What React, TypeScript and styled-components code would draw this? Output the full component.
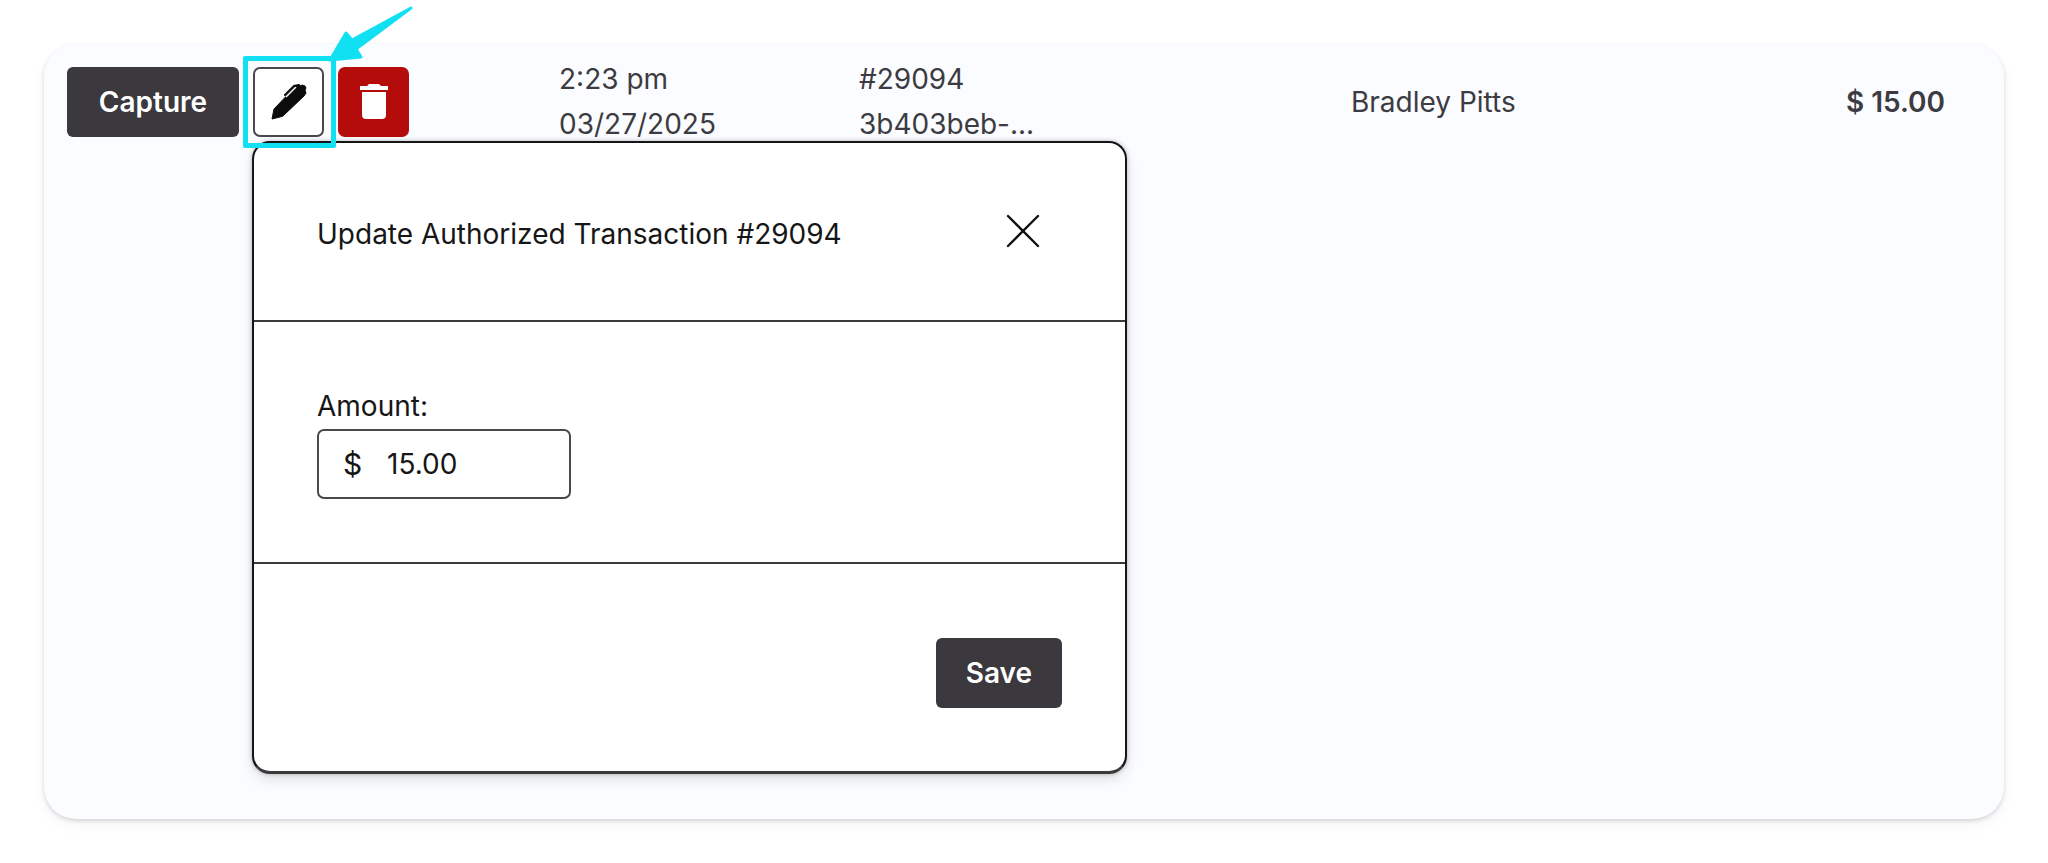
import React from "react";
import styled, { createGlobalStyle, css } from "styled-components";

const GlobalStyle = createGlobalStyle`
  *, *::before, *::after { box-sizing: border-box; }
  body {
    margin: 0;
    background: #fff;
    color: #3b3b41;
    font-family: Inter, "Noto Sans", sans-serif;
    font-size: 28px;
    line-height: 45px;
  }
  button, input { font: inherit; color: inherit; }
`;

const Page = styled.main`
  padding: 44px;
`;

const Card = styled.section`
  padding: 13px 23px 45px;
  border-radius: 32px;
  background: #fbfcff;
  box-shadow: 0 2px 4px rgba(0, 0, 0, 0.14), 0 6px 16px rgba(0, 0, 0, 0.04);
`;

const Row = styled.div`
  display: grid;
  grid-template-columns: 492fr 300fr 492fr 594fr;
  align-items: center;
  padding-right: 36px;
`;

const Actions = styled.div`
  display: flex;
  gap: 14px;
`;

const Cell = styled.div`
  display: flex;
  flex-direction: column;
`;

const Summary = styled.div`
  display: flex;
  justify-content: space-between;
`;

const Total = styled.strong`
  font-weight: 600;
`;

const SolidButton = styled.button<{ $wide?: boolean }>`
  height: 70px;
  padding: 0 30px;
  border: 0;
  border-radius: 6px;
  background: #3b383e;
  color: #fff;
  font-weight: 600;
  ${(p) => p.$wide && css`min-width: 172px;`}
`;

const IconButton = styled.button<{ $danger?: boolean }>`
  display: flex;
  align-items: center;
  justify-content: center;
  width: 71px;
  height: 70px;
  padding: 0;
  border: ${(p) => (p.$danger ? "0" : "2px solid #4a474d")};
  border-radius: 7px;
  background: ${(p) => (p.$danger ? "#b40c0b" : "#fff")};
`;

const EditAnchor = styled.div`
  position: relative;
`;

const Highlight = styled.span`
  position: absolute;
  inset: -11px -12px -11px -10px;
  z-index: 2;
  border: 5px solid #10e0f2;
  border-radius: 2px;
  pointer-events: none;
`;

const Arrow = styled.svg`
  position: absolute;
  left: 75px;
  bottom: 75px;
  z-index: 2;
  overflow: visible;
  pointer-events: none;
`;

const Dialog = styled.form`
  position: relative;
  z-index: 1;
  max-width: 875px;
  margin: -6px 0 0 185px;
  border: 2px solid #151515;
  border-bottom: 3px solid #3a3a3a;
  border-radius: 18px;
  background: #fff;
  color: #161616;
  box-shadow: 0 0 4px rgba(0, 0, 0, 0.25), 0 6px 14px rgba(0, 0, 0, 0.1);
`;

const DialogHeader = styled.header`
  display: flex;
  align-items: center;
  justify-content: space-between;
  height: 179px;
  padding: 6px 78px 0 63px;
  border-bottom: 2px solid #3a3a3a;
`;

const Title = styled.h2`
  margin: 0;
  font-size: 28px;
  font-weight: 400;
`;

const CloseButton = styled.button`
  display: flex;
  padding: 0;
  margin-bottom: 8px;
  border: 0;
  background: none;
`;

const DialogBody = styled.div`
  padding: 62px 63px 63px;
  border-bottom: 2px solid #3a3a3a;
`;

const Label = styled.label`
  display: block;
`;

const MoneyField = styled.div`
  display: flex;
  align-items: center;
  width: 254px;
  height: 70px;
  padding: 0 24px;
  border: 2px solid #4a4a4a;
  border-radius: 7px;
`;

const Currency = styled.span`
  width: 44px;
  font-size: 30px;
`;

const MoneyInput = styled.input`
  flex: 1;
  min-width: 0;
  padding: 0;
  border: 0;
  outline: 0;
  background: none;
`;

const DialogFooter = styled.footer`
  display: flex;
  justify-content: flex-end;
  padding: 74px 63px 63px;
`;

const PenIcon = () => (
  <svg width="36" height="36" viewBox="0 0 36 36" aria-hidden="true">
    <path
      fill="#0c0c0c"
      stroke="#0c0c0c"
      strokeLinejoin="round"
      d="M1 35 3 25 24 3 27 1 29 2 31 1 34 2 35 4 34 6 35 9 33 12 12 32 9 33Z"
    />
    <path fill="none" stroke="#fff" strokeWidth="1.5" d="M15 13 25 3" />
    <path fill="none" stroke="#0c0c0c" strokeWidth="2" strokeLinecap="round" d="M14 11 23 2 28 1" />
  </svg>
);

const TrashIcon = () => (
  <svg width="28" height="36" viewBox="0 0 28 36" aria-hidden="true">
    <path fill="#fff" d="M0 2H7L9 0H19L21 2H28V6H0ZM2 8H26V31Q26 35 22 35H6Q2 35 2 31Z" />
  </svg>
);

export default function App() {
  return (
    <>
      <GlobalStyle />
      <Page>
        <Card>
          <Row>
            <Actions>
              <SolidButton type="button" $wide>Capture</SolidButton>
              <EditAnchor>
                <IconButton type="button" aria-label="Edit">
                  <PenIcon />
                </IconButton>
                <Highlight />
                <Arrow width="84" height="56" viewBox="0 0 84 56" aria-hidden="true">
                  <path
                    fill="#10e0f2"
                    stroke="#10e0f2"
                    strokeWidth="3"
                    strokeLinejoin="round"
                    d="M83 2 24 34 18 27 2 54 33 51 28 43Z"
                  />
                </Arrow>
              </EditAnchor>
              <IconButton type="button" aria-label="Delete" $danger>
                <TrashIcon />
              </IconButton>
            </Actions>
            <Cell>
              <span>2:23 pm</span>
              <span>03/27/2025</span>
            </Cell>
            <Cell>
              <span>#29094</span>
              <span>3b403beb-...</span>
            </Cell>
            <Summary>
              <span>Bradley Pitts</span>
              <Total>$ 15.00</Total>
            </Summary>
          </Row>
          <Dialog>
            <DialogHeader>
              <Title>Update Authorized Transaction #29094</Title>
              <CloseButton type="button" aria-label="Close">
                <svg width="48" height="34" viewBox="0 0 48 34" aria-hidden="true">
                  <path
                    fill="none"
                    stroke="#111"
                    strokeWidth="2.4"
                    strokeLinecap="round"
                    d="M9 2 39 32M39 2 9 32"
                  />
                </svg>
              </CloseButton>
            </DialogHeader>
            <DialogBody>
              <Label htmlFor="amount">Amount:</Label>
              <MoneyField>
                <Currency>$</Currency>
                <MoneyInput id="amount" type="text" defaultValue="15.00" />
              </MoneyField>
            </DialogBody>
            <DialogFooter>
              <SolidButton type="button">Save</SolidButton>
            </DialogFooter>
          </Dialog>
        </Card>
      </Page>
    </>
  );
}
